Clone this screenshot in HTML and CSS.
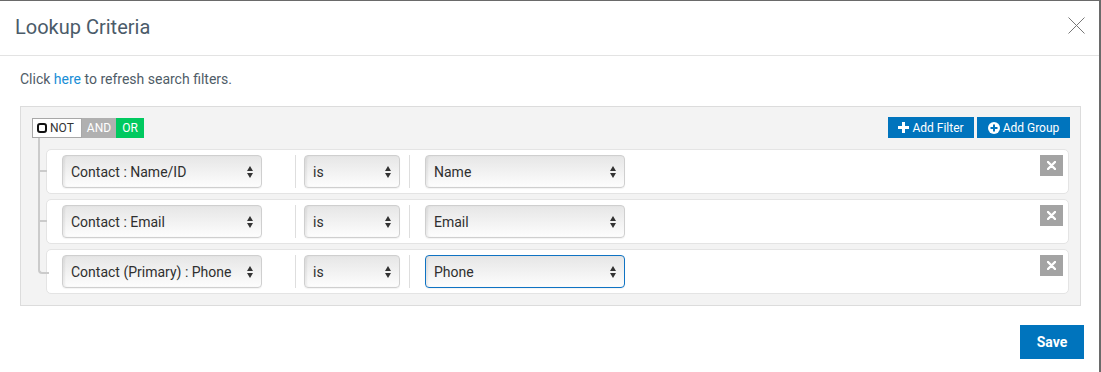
FILE: index.html
```html
<!DOCTYPE html>
<html>
<head>
<meta charset="utf-8">
<link rel="stylesheet" href="styles.css">
</head>
<body>
<div class="modal">
  <div class="modal-header">
    <h4 class="modal-title">Lookup Criteria</h4>
    <span class="close">
      <svg width="17" height="17" viewBox="0 0 17 17"><path d="M0.5 0.5 L16.5 16.5 M16.5 0.5 L0.5 16.5" stroke="#777" stroke-width="1" fill="none"/></svg>
    </span>
  </div>
  <div class="modal-body">
    <p class="hint">Click <a class="link">here</a> to refresh search filters.</p>
    <div class="builder">
      <div class="group-head">
        <div class="conds">
          <span class="cond cond-not"><span class="chk"></span>NOT</span>
          <span class="cond cond-and">AND</span>
          <span class="cond cond-or">OR</span>
        </div>
        <div class="actions">
          <span class="btn-sm">
            <svg width="11" height="11" viewBox="0 0 11 11"><path d="M4 0h3v4h4v3H7v4H4V7H0V4h4z" fill="#fff"/></svg>
            Add Filter
          </span>
          <span class="btn-sm">
            <svg width="12" height="12" viewBox="0 0 12 12"><circle cx="6" cy="6" r="6" fill="#fff"/><path d="M5 2.5h2v2.5h2.5v2H7v2.5H5V7H2.5V5H5z" fill="#0074bd"/></svg>
            Add Group
          </span>
        </div>
      </div>
      <div class="rules">
        <div class="rule">
          <div class="sel sel-field"><span>Contact : Name/ID</span><i class="arr"></i></div>
          <div class="divider"></div>
          <div class="sel sel-op"><span>is</span><i class="arr"></i></div>
          <div class="divider divider-2"></div>
          <div class="sel sel-val"><span>Name</span><i class="arr"></i></div>
          <span class="del"><svg width="9" height="9" viewBox="0 0 9 9"><path d="M1 1L8 8M8 1L1 8" stroke="#fff" stroke-width="2.4" stroke-linecap="round"/></svg></span>
        </div>
        <div class="rule">
          <div class="sel sel-field"><span>Contact : Email</span><i class="arr"></i></div>
          <div class="divider"></div>
          <div class="sel sel-op"><span>is</span><i class="arr"></i></div>
          <div class="divider divider-2"></div>
          <div class="sel sel-val"><span>Email</span><i class="arr"></i></div>
          <span class="del"><svg width="9" height="9" viewBox="0 0 9 9"><path d="M1 1L8 8M8 1L1 8" stroke="#fff" stroke-width="2.4" stroke-linecap="round"/></svg></span>
        </div>
        <div class="rule rule-last">
          <div class="sel sel-field"><span>Contact (Primary) : Phone</span><i class="arr"></i></div>
          <div class="divider"></div>
          <div class="sel sel-op"><span>is</span><i class="arr"></i></div>
          <div class="divider divider-2"></div>
          <div class="sel sel-val sel-focus"><span>Phone</span><i class="arr"></i></div>
          <span class="del"><svg width="9" height="9" viewBox="0 0 9 9"><path d="M1 1L8 8M8 1L1 8" stroke="#fff" stroke-width="2.4" stroke-linecap="round"/></svg></span>
        </div>
      </div>
    </div>
    <div class="footer">
      <span class="btn-save">Save</span>
    </div>
  </div>
</div>
</body>
</html>
```
FILE: styles.css
```css
* { box-sizing: border-box; }
html, body { margin: 0; padding: 0; background: #fff; }
body { font-family: Roboto, "Liberation Sans", Arial, sans-serif; color: #333; width: 1101px; height: 372px; overflow: hidden; }

.modal {
  width: 1101px;
  height: 372px;
  border-top: 1px solid #6a6a6a;
  border-right: 2px solid #6a6a6a;
  background: #fff;
}

.modal-header {
  height: 55px;
  border-bottom: 1px solid #e3e3e3;
  display: flex;
  align-items: center;
  justify-content: space-between;
  padding: 0 14px 0 15px;
}
.modal-title {
  margin: 0;
  font-size: 20px;
  font-weight: 400;
  color: #4b5b69;
  line-height: 24px;
  padding-bottom: 2px;
}
.close { display: flex; width: 17px; height: 17px; margin-bottom: 6px; }

.modal-body { padding: 14px 15px 0 20px; }
.hint {
  margin: 0;
  font-size: 14px;
  line-height: 18px;
  color: #4f5c67;
}
.link { color: #1a8ed6; }

.builder {
  margin-top: 18px;
  width: 1061px;
  height: 200px;
  border: 1px solid #dcdcdc;
  background: #f3f3f3;
  padding: 10px 11px 0 11px;
}

.group-head {
  display: flex;
  justify-content: space-between;
  align-items: flex-start;
  height: 32px;
}
.conds { display: flex; margin-top: 1px; height: 20px; }
.cond {
  display: flex;
  align-items: center;
  font-size: 12px;
  line-height: 20px;
  height: 20px;
  flex: none;
}
.cond-not {
  width: 50px;
  background: #fff;
  border: 1px solid #a8a8a8;
  color: #333;
  padding-left: 4px;
  gap: 3px;
}
.chk {
  width: 10px;
  height: 10px;
  border: 2px solid #111;
  border-radius: 3px;
  flex: none;
}
.cond-and {
  width: 34px;
  background: #b0b0b0;
  color: #fff;
  justify-content: center;
}
.cond-or {
  width: 28px;
  background: #00c95f;
  color: #fff;
  justify-content: center;
}

.actions { display: flex; gap: 3px; margin-right: -1px; }
.btn-sm {
  display: flex;
  align-items: center;
  justify-content: center;
  gap: 3px;
  height: 21px;
  padding: 0 6px;
  background: #0074bd;
  color: #fff;
  font-size: 12px;
}
.btn-sm:first-child { width: 86px; }
.btn-sm:last-child { width: 93px; }

.rules {
  position: relative;
  padding-left: 14px;
  display: flex;
  flex-direction: column;
  gap: 5px;
}
.rules::before {
  content: "";
  position: absolute;
  left: 6px;
  top: -11px;
  height: 116px;
  border-left: 2px solid #cbcbcb;
}
.rule {
  position: relative;
  height: 45px;
  background: #fff;
  border: 1px solid #e4e4e4;
  border-radius: 5px;
  display: flex;
  align-items: flex-start;
  padding: 5px 0 0 15px;
}
.rule::before {
  content: "";
  position: absolute;
  left: -9px;
  top: 20px;
  width: 9px;
  border-top: 2px solid #cbcbcb;
}
.rule-last::before {
  top: -1px;
  left: -9px;
  width: 9px;
  height: 23px;
  border-top: none;
  border-left: 2px solid #cbcbcb;
  border-bottom: 2px solid #cbcbcb;
  border-bottom-left-radius: 4px;
}

.sel {
  height: 33px;
  border: 1px solid #cfcfcf;
  border-radius: 4px;
  background: linear-gradient(#e6e6e6, #f6f6f6 70%, #fdfdfd);
  box-shadow: inset 2px 0 2px rgba(0,0,0,0.06), 0 1px 1px rgba(0,0,0,0.05);
  display: flex;
  align-items: center;
  justify-content: space-between;
  padding: 0 7px 0 8px;
  font-size: 14px;
  color: #2f2f2f;
}
.sel-field { width: 200px; }
.sel-op { width: 96px; }
.sel-val { width: 200px; }
.sel-focus { border-color: #0f73c3; }

.arr {
  position: relative;
  width: 7px;
  height: 12px;
  flex: none;
}
.arr::before, .arr::after {
  content: "";
  position: absolute;
  left: 0;
  border-left: 3.5px solid transparent;
  border-right: 3.5px solid transparent;
}
.arr::before { top: 0; border-bottom: 5px solid #333; }
.arr::after { bottom: 0; border-top: 5px solid #333; }

.divider {
  width: 1px;
  height: 33px;
  background: #dedede;
  margin: 0 8px 0 33px;
}
.divider-2 { margin: 0 15px 0 9px; }

.del {
  margin-left: auto;
  margin-right: 5px;
  width: 23px;
  height: 21px;
  background: #a3a3a3;
  display: flex;
  align-items: center;
  justify-content: center;
}

.footer {
  display: flex;
  justify-content: flex-end;
  padding-top: 19px;
}
.btn-save {
  display: flex;
  align-items: center;
  justify-content: center;
  width: 64px;
  height: 34px;
  background: #0074bd;
  color: #fff;
  font-size: 14px;
  font-weight: 700;
}
```
